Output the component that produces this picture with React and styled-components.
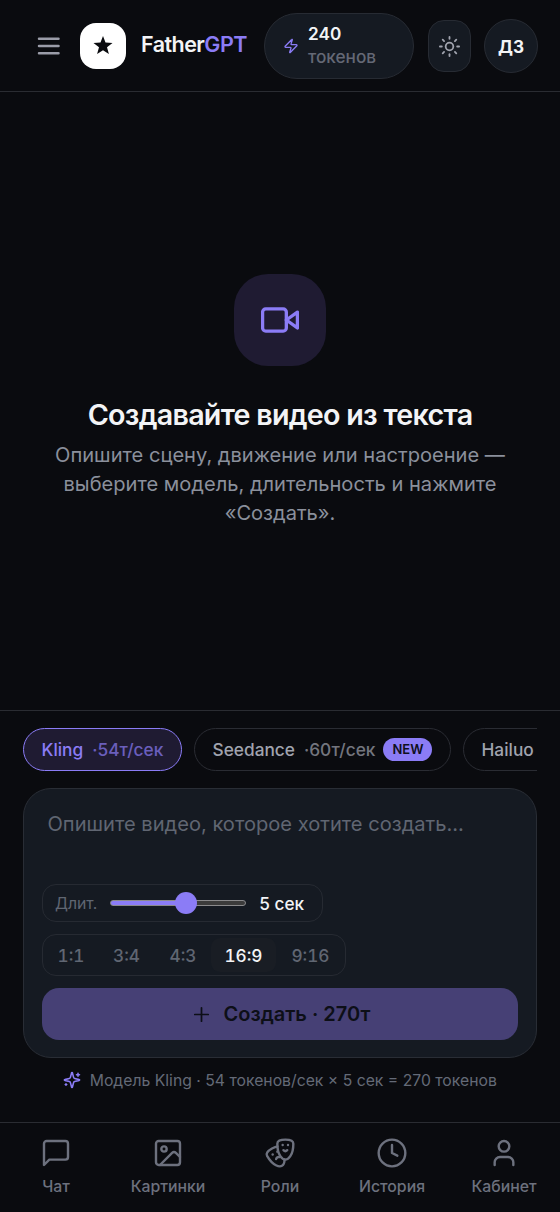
import React, { useState } from 'react';
import styled, { createGlobalStyle } from 'styled-components';
import { Clock, Drama, Plus, Sun, Zap } from 'lucide-react';

const GlobalStyle = createGlobalStyle`
    * {
        box-sizing: border-box;
    }

    body {
        margin: 0;
        background: #0a0b0f;
        color: #f3f4f6;
        font-family: Inter, "Liberation Sans", sans-serif;
    }

    button, textarea {
        font-family: inherit;
    }
`;

const Page = styled.div`
    display: flex;
    flex-direction: column;
    width: 100%;
    height: 1212px;
    overflow: hidden;
`;

const Header = styled.header`
    display: flex;
    align-items: center;
    height: 92px;
    padding: 1px 22px 0 37px;
    border-bottom: 1px solid #2a2c32;
    flex-shrink: 0;
`;

const MenuButton = styled.button`
    display: flex;
    padding: 0;
    border: none;
    background: none;
    color: #9a9ca8;
    margin-right: 20px;
`;

const Logo = styled.div`
    display: flex;
    align-items: center;
    justify-content: center;
    width: 46px;
    height: 46px;
    margin-right: 15px;
    border-radius: 16px;
    background: #ffffff;
`;

const Brand = styled.div`
    width: 123px;
    font-size: 21.5px;
    font-weight: 600;
    letter-spacing: -0.55px;
    line-height: 28px;
    padding-bottom: 4px;

    span {
        color: #8b7cf6;
    }
`;

const Tokens = styled.div`
    display: flex;
    align-items: center;
    gap: 9px;
    width: 150px;
    height: 66px;
    padding-left: 18px;
    margin-right: 14px;
    border: 1px solid #272b33;
    border-radius: 33px;
    background: #151a22;
    color: #8b7cf6;
`;

const TokensText = styled.div`
    padding-bottom: 2px;
    font-size: 17.2px;
    line-height: 23px;
    font-weight: 600;
    color: #f3f4f6;

    span {
        display: block;
        font-weight: 500;
        color: #646875;
    }
`;

const ThemeButton = styled.button`
    display: flex;
    align-items: center;
    justify-content: center;
    width: 43px;
    height: 52px;
    padding: 0;
    margin-right: 13px;
    border: 1px solid #272b33;
    border-radius: 16px;
    background: #151a22;
    color: #a0a3ae;
`;

const Avatar = styled.div`
    display: flex;
    align-items: center;
    justify-content: center;
    width: 54px;
    height: 54px;
    border: 1px solid #272b33;
    border-radius: 50%;
    background: #151a22;
    font-size: 17.2px;
    font-weight: 700;
`;

const Empty = styled.main`
    display: flex;
    flex-direction: column;
    align-items: center;
    height: 618px;
    padding-top: 182px;
    flex-shrink: 0;
    text-align: center;
`;

const EmptyIcon = styled.div`
    display: flex;
    align-items: center;
    justify-content: center;
    width: 92px;
    height: 92px;
    margin-bottom: 30px;
    border-radius: 34px;
    background: #1f1b32;
    color: #8b7cf6;
`;

const Title = styled.h1`
    margin: 0 0 7px;
    font-size: 28.7px;
    line-height: 38px;
    font-weight: 600;
    letter-spacing: -0.74px;
`;

const Description = styled.p`
    width: 462px;
    margin: 0;
    font-size: 20.1px;
    line-height: 29px;
    color: #8b909c;
`;

const Composer = styled.section`
    height: 412px;
    padding: 17px 23px 0;
    border-top: 1px solid #2a2c32;
    flex-shrink: 0;
`;

const Models = styled.div`
    display: flex;
    gap: 12px;
    overflow: hidden;
    margin-bottom: 17px;
`;

const Model = styled.button`
    display: flex;
    align-items: center;
    flex-shrink: 0;
    width: ${(props) => props.$width}px;
    height: 43px;
    padding: 0 0 0 17.5px;
    border: 1px solid ${(props) => (props.$active ? '#8b7cf6' : '#2a2c33')};
    border-radius: 22px;
    background: ${(props) => (props.$active ? '#1f1b32' : 'transparent')};
    color: ${(props) => (props.$active ? '#8b7cf6' : '#a0a3ae')};
    font-size: 17.3px;
    font-weight: 500;
    white-space: nowrap;
`;

const Price = styled.span`
    margin-left: 9px;
    opacity: 0.7;
`;

const NewBadge = styled.span`
    width: 49px;
    margin-left: 8px;
    border-radius: 12px;
    background: #8b7cf6;
    color: #0f1020;
    font-size: 13px;
    font-weight: 600;
    line-height: 23px;
    text-align: center;
`;

const Card = styled.div`
    display: flex;
    flex-direction: column;
    align-items: flex-start;
    height: 270px;
    padding: 18px 18px 17px;
    border: 1px solid #292d35;
    border-radius: 28px;
    background: #151a22;
`;

const Prompt = styled.textarea`
    width: 100%;
    height: 77px;
    padding: 3px 5px 3px 5.5px;
    border: none;
    outline: none;
    resize: none;
    background: none;
    color: #f3f4f6;
    font-size: 20.1px;
    line-height: 28px;

    &::placeholder {
        color: #606672;
        opacity: 1;
    }
`;

const Duration = styled.label`
    display: flex;
    align-items: center;
    width: 281px;
    height: 38px;
    padding-left: 12px;
    margin-bottom: 12px;
    border: 1px solid #262a32;
    border-radius: 14px;
    font-size: 15.8px;
    color: #606672;
`;

const Range = styled.input`
    appearance: none;
    width: 136px;
    height: 22px;
    margin: 0 13px;
    background: none;

    &::-webkit-slider-runnable-track {
        height: 6px;
        border: 1px solid #8a8a8c;
        border-radius: 3px;
        background: linear-gradient(90deg, #8b7cf6 56%, #3b3b3b 56%);
    }

    &::-webkit-slider-thumb {
        appearance: none;
        width: 22px;
        height: 22px;
        margin-top: -9px;
        border-radius: 50%;
        background: #8b7cf6;
    }
`;

const Seconds = styled.span`
    font-size: 17.2px;
    font-weight: 500;
    color: #f3f4f6;
`;

const Ratios = styled.div`
    display: flex;
    align-items: center;
    height: 42px;
    padding-left: 1px;
    margin-bottom: 12px;
    border: 1px solid #262a32;
    border-radius: 14px;
`;

const Ratio = styled.button`
    width: ${(props) => props.$width}px;
    height: 34px;
    padding: 0;
    border: none;
    border-radius: 9px;
    background: ${(props) => (props.$active ? '#191d24' : 'transparent')};
    color: ${(props) => (props.$active ? '#f3f4f6' : '#606672')};
    font-size: 17.2px;
    font-weight: 500;
    font-variant-numeric: tabular-nums;
`;

const CreateButton = styled.button`
    display: flex;
    align-items: center;
    justify-content: center;
    gap: 11px;
    width: 100%;
    height: 52px;
    flex-shrink: 0;
    padding: 0;
    border: none;
    border-radius: 17px;
    background: #464075;
    color: #0d0f17;
    font-size: 20px;
    font-weight: 600;
`;

const Hint = styled.div`
    display: flex;
    align-items: center;
    justify-content: center;
    gap: 8.5px;
    height: 20px;
    margin-top: 12px;
    color: #646a77;
    font-size: 15.75px;
    white-space: nowrap;

    svg {
        color: #8b7cf6;
    }
`;

const TabBar = styled.nav`
    display: grid;
    grid-template-columns: repeat(5, 1fr);
    height: 90px;
    border-top: 1px solid #2a2c32;
`;

const Tab = styled.a`
    display: flex;
    flex-direction: column;
    align-items: center;
    gap: 7px;
    padding-top: 14px;
    color: #6d717e;
    font-size: 15.8px;
    font-weight: 500;
    line-height: 22px;
`;

// Outline icons that share the same 24px grid
function Icon({ size, stroke = 2, children }) {
    return (
        <svg
            width={size}
            height={size}
            viewBox="0 0 24 24"
            fill="none"
            stroke="currentColor"
            strokeWidth={stroke}
            strokeLinecap="round"
            strokeLinejoin="round"
        >
            {children}
        </svg>
    );
}

const models = [
    { name: 'Kling', price: '54т/сек', width: 159 },
    { name: 'Seedance', price: '60т/сек', width: 257, isNew: true },
    { name: 'Hailuo', width: 170 },
];

const ratios = [
    { value: '1:1', width: 54 },
    { value: '3:4', width: 57 },
    { value: '4:3', width: 56 },
    { value: '16:9', width: 65 },
    { value: '9:16', width: 69 },
];

const tabs = [
    {
        title: 'Чат',
        icon: (
            <Icon size={32} stroke={1.8}>
                <path d="M21 15a2 2 0 0 1-2 2H7l-4 4V5a2 2 0 0 1 2-2h14a2 2 0 0 1 2 2z" />
            </Icon>
        ),
    },
    {
        title: 'Картинки',
        icon: (
            <Icon size={32} stroke={1.8}>
                <rect x="3" y="3" width="18" height="18" rx="2" />
                <circle cx="9" cy="9" r="2" />
                <path d="m21 15-3.086-3.086a2 2 0 0 0-2.828 0L6 21" />
            </Icon>
        ),
    },
    { title: 'Роли', icon: <Drama size={32} strokeWidth={1.8} /> },
    { title: 'История', icon: <Clock size={32} strokeWidth={1.8} /> },
    {
        title: 'Кабинет',
        icon: (
            <Icon size={32} stroke={1.8}>
                <path d="M19 21v-2a4 4 0 0 0-4-4H9a4 4 0 0 0-4 4v2" />
                <circle cx="12" cy="7" r="4" />
            </Icon>
        ),
    },
];

function App() {
    const [model, setModel] = useState('Kling');
    const [ratio, setRatio] = useState('16:9');

    return (
        <Page>
            <GlobalStyle />
            <Header>
                <MenuButton>
                    <svg width="23" height="18" viewBox="0 0 23 18" stroke="currentColor" strokeWidth="2.5" strokeLinecap="round">
                        <path d="M2 1.8h19.5M2 9h19.5M2 16.2h19.5" />
                    </svg>
                </MenuButton>
                <Logo>
                    <svg width="24" height="24" viewBox="0 0 24 24" fill="#0a0b0f">
                        <path d="M12 2l2.5 6.6 7 .3-5.5 4.4 1.9 6.8-5.9-3.9-5.9 3.9L8 13.3 2.5 8.9l7-.3z" />
                    </svg>
                </Logo>
                <Brand>Father<span>GPT</span></Brand>
                <Tokens>
                    <Zap size={16} strokeWidth={2} />
                    <TokensText>240 <span>токенов</span></TokensText>
                </Tokens>
                <ThemeButton>
                    <Sun size={23} strokeWidth={1.9} />
                </ThemeButton>
                <Avatar>ДЗ</Avatar>
            </Header>
            <Empty>
                <EmptyIcon>
                    <Icon size={38} stroke={2.1}>
                        <path d="M23 7l-7 5 7 5V7z" />
                        <rect x="1" y="5" width="15" height="14" rx="2" />
                    </Icon>
                </EmptyIcon>
                <Title>Создавайте видео из текста</Title>
                <Description>
                    Опишите сцену, движение или настроение — выберите модель, длительность и нажмите «Создать».
                </Description>
            </Empty>
            <Composer>
                <Models>
                    {models.map((item) => (
                        <Model
                            key={item.name}
                            $width={item.width}
                            $active={item.name === model}
                            onClick={() => setModel(item.name)}
                        >
                            {item.name}
                            {item.price && <Price>·{item.price}</Price>}
                            {item.isNew && <NewBadge>NEW</NewBadge>}
                        </Model>
                    ))}
                </Models>
                <Card>
                    <Prompt placeholder="Опишите видео, которое хотите создать..." />
                    <Duration>
                        Длит.
                        <Range type="range" min="0" max="100" defaultValue="57" />
                        <Seconds>5 сек</Seconds>
                    </Duration>
                    <Ratios>
                        {ratios.map((item) => (
                            <Ratio
                                key={item.value}
                                $width={item.width}
                                $active={item.value === ratio}
                                onClick={() => setRatio(item.value)}
                            >
                                {item.value}
                            </Ratio>
                        ))}
                    </Ratios>
                    <CreateButton>
                        <Plus size={23} strokeWidth={1.8} />
                        Создать · 270т
                    </CreateButton>
                </Card>
                <Hint>
                    <Icon size={18} stroke={2.1}>
                        <path d="M9.9 15.5A2 2 0 0 0 8.5 14.1l-6.1-1.6a.5.5 0 0 1 0-1L8.5 9.9A2 2 0 0 0 9.9 8.5l1.6-6.1a.5.5 0 0 1 1 0L14.1 8.5A2 2 0 0 0 15.5 9.9l6.1 1.6a.5.5 0 0 1 0 1L15.5 14.1a2 2 0 0 0-1.4 1.4l-1.6 6.1a.5.5 0 0 1-1 0z" />
                        <path d="M20 3v4M22 5h-4M4 17v2M5 18H3" />
                    </Icon>
                    Модель Kling · 54 токенов/сек × 5 сек = 270 токенов
                </Hint>
            </Composer>
            <TabBar>
                {tabs.map((tab) => (
                    <Tab key={tab.title}>
                        {tab.icon}
                        {tab.title}
                    </Tab>
                ))}
            </TabBar>
        </Page>
    );
}

export default App;
